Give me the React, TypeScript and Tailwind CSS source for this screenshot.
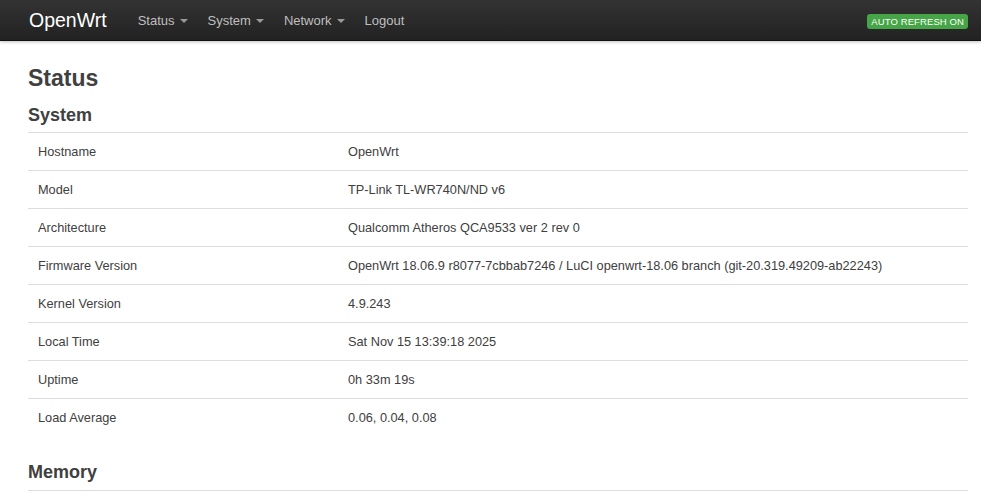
const rows: [string, string][] = [
  ["Hostname", "OpenWrt"],
  ["Model", "TP-Link TL-WR740N/ND v6"],
  ["Architecture", "Qualcomm Atheros QCA9533 ver 2 rev 0"],
  ["Firmware Version", "OpenWrt 18.06.9 r8077-7cbbab7246 / LuCI openwrt-18.06 branch (git-20.319.49209-ab22243)"],
  ["Kernel Version", "4.9.243"],
  ["Local Time", "Sat Nov 15 13:39:18 2025"],
  ["Uptime", "0h 33m 19s"],
  ["Load Average", "0.06, 0.04, 0.08"],
];

const menus = ["Status", "System", "Network"];

const Caret = () => (
  <span className="ml-[5px] inline-block h-0 w-0 border-x-[4px] border-t-[4px] border-x-transparent border-t-[#999] align-middle" />
);

export default function App() {
  return (
    <div className="min-h-[497px] bg-white font-['Liberation_Sans',Arial,sans-serif] text-[#404040]">
      <div className="flex h-[41px] items-center border-b border-[#111] bg-gradient-to-b from-[#333] to-[#222] pl-[29px] pr-[13px] pt-[2px] shadow-[0_1px_3px_rgba(0,0,0,0.25)]">
        <span className="mr-[31px] text-[19.5px] text-white">OpenWrt</span>
        <nav className="flex items-center text-[13px] text-[#bfbfbf]">
          {menus.map((m) => (
            <span key={m} className="mr-[20px] flex items-center">
              {m}
              <Caret />
            </span>
          ))}
          <span>Logout</span>
        </nav>
        <span className="ml-auto rounded-[3px] bg-[#46a546] px-[4px] py-[1px] text-[9.5px] leading-[13px] tracking-[0.1px] text-white">
          AUTO REFRESH ON
        </span>
      </div>

      <main className="px-[28px] pr-[13px]">
        <h2 className="mt-[22px] text-[23px] font-bold leading-[30px]">Status</h2>
        <h3 className="mt-[10px] text-[18px] font-bold leading-[24px]">System</h3>
        <table className="mt-[5px] w-full border-collapse text-[12.75px]">
          <tbody>
            {rows.map(([k, v]) => (
              <tr key={k} className="border-t border-[#ddd]">
                <td className="h-[38px] w-[310px] px-[10px] align-middle">{k}</td>
                <td className="h-[38px] px-[10px] align-middle">{v}</td>
              </tr>
            ))}
          </tbody>
        </table>
        <h3 className="mt-[23px] text-[18px] font-bold leading-[24px]">Memory</h3>
        <div className="mt-[6px] border-t border-[#ddd]" />
      </main>
    </div>
  );
}
